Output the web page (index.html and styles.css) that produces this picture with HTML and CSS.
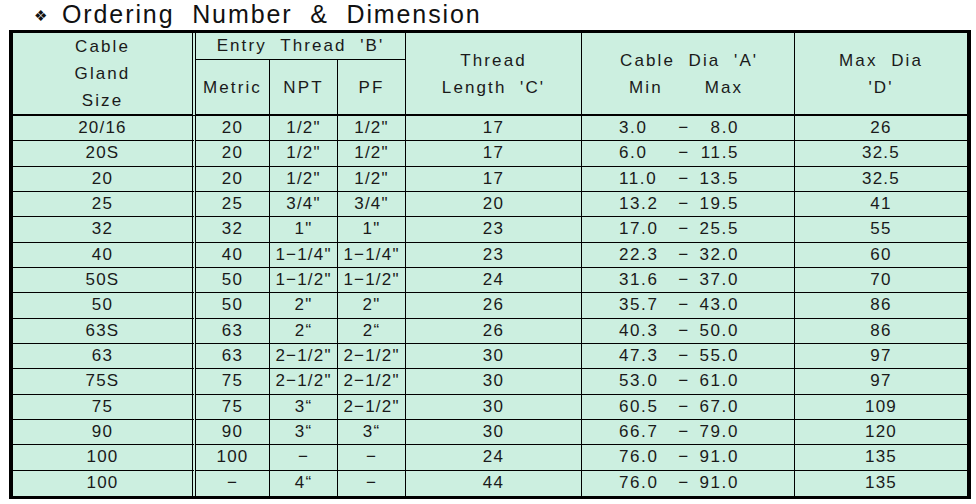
FILE: index.html
```html
<!DOCTYPE html>
<html>
<head>
<meta charset="utf-8">
<link rel="stylesheet" href="styles.css">
</head>
<body>
<h1 class="title"><span class="bullet">❖</span><span class="ttl">Ordering&nbsp; Number&nbsp; &amp;&nbsp; Dimension</span></h1>
<table class="spec">
  <colgroup>
    <col class="c-size">
    <col class="c-metric">
    <col class="c-npt">
    <col class="c-pf">
    <col class="c-len">
    <col class="c-dia">
    <col class="c-max">
  </colgroup>
  <thead>
    <tr class="h1">
      <th rowspan="2" class="dbl">Cable<br>Gland<br>Size</th>
      <th colspan="3">Entry&nbsp; Thread&nbsp; 'B'</th>
      <th rowspan="2">Thread<br>Length&nbsp; 'C'</th>
      <th rowspan="2" class="dia">Cable&nbsp; Dia&nbsp; 'A'<br><span class="mn">Min</span><span class="mx">Max</span></th>
      <th rowspan="2" class="last">Max&nbsp; Dia<br>'D'</th>
    </tr>
    <tr class="h2">
      <th>Metric</th>
      <th>NPT</th>
      <th>PF</th>
    </tr>
  </thead>
  <tbody>
    <tr><td class="dbl">20/16</td><td>20</td><td>1/2"</td><td>1/2"</td><td>17</td><td class="rng"><span class="lo">3.0</span><span class="ds">−</span><span class="hi">8.0</span></td><td class="last">26</td></tr>
    <tr><td class="dbl">20S</td><td>20</td><td>1/2"</td><td>1/2"</td><td>17</td><td class="rng"><span class="lo">6.0</span><span class="ds">−</span><span class="hi">11.5</span></td><td class="last">32.5</td></tr>
    <tr><td class="dbl">20</td><td>20</td><td>1/2"</td><td>1/2"</td><td>17</td><td class="rng"><span class="lo">11.0</span><span class="ds">−</span><span class="hi">13.5</span></td><td class="last">32.5</td></tr>
    <tr><td class="dbl">25</td><td>25</td><td>3/4"</td><td>3/4"</td><td>20</td><td class="rng"><span class="lo">13.2</span><span class="ds">−</span><span class="hi">19.5</span></td><td class="last">41</td></tr>
    <tr><td class="dbl">32</td><td>32</td><td>1"</td><td>1"</td><td>23</td><td class="rng"><span class="lo">17.0</span><span class="ds">−</span><span class="hi">25.5</span></td><td class="last">55</td></tr>
    <tr><td class="dbl">40</td><td>40</td><td>1−1/4"</td><td>1−1/4"</td><td>23</td><td class="rng"><span class="lo">22.3</span><span class="ds">−</span><span class="hi">32.0</span></td><td class="last">60</td></tr>
    <tr><td class="dbl">50S</td><td>50</td><td>1−1/2"</td><td>1−1/2"</td><td>24</td><td class="rng"><span class="lo">31.6</span><span class="ds">−</span><span class="hi">37.0</span></td><td class="last">70</td></tr>
    <tr><td class="dbl">50</td><td>50</td><td>2"</td><td>2"</td><td>26</td><td class="rng"><span class="lo">35.7</span><span class="ds">−</span><span class="hi">43.0</span></td><td class="last">86</td></tr>
    <tr><td class="dbl">63S</td><td>63</td><td>2“</td><td>2“</td><td>26</td><td class="rng"><span class="lo">40.3</span><span class="ds">−</span><span class="hi">50.0</span></td><td class="last">86</td></tr>
    <tr><td class="dbl">63</td><td>63</td><td>2−1/2"</td><td>2−1/2"</td><td>30</td><td class="rng"><span class="lo">47.3</span><span class="ds">−</span><span class="hi">55.0</span></td><td class="last">97</td></tr>
    <tr><td class="dbl">75S</td><td>75</td><td>2−1/2"</td><td>2−1/2"</td><td>30</td><td class="rng"><span class="lo">53.0</span><span class="ds">−</span><span class="hi">61.0</span></td><td class="last">97</td></tr>
    <tr><td class="dbl">75</td><td>75</td><td>3“</td><td>2−1/2"</td><td>30</td><td class="rng"><span class="lo">60.5</span><span class="ds">−</span><span class="hi">67.0</span></td><td class="last">109</td></tr>
    <tr><td class="dbl">90</td><td>90</td><td>3“</td><td>3“</td><td>30</td><td class="rng"><span class="lo">66.7</span><span class="ds">−</span><span class="hi">79.0</span></td><td class="last">120</td></tr>
    <tr><td class="dbl">100</td><td>100</td><td>−</td><td>−</td><td>24</td><td class="rng"><span class="lo">76.0</span><span class="ds">−</span><span class="hi">91.0</span></td><td class="last">135</td></tr>
    <tr class="end"><td class="dbl">100</td><td>−</td><td>4“</td><td>−</td><td>44</td><td class="rng"><span class="lo">76.0</span><span class="ds">−</span><span class="hi">91.0</span></td><td class="last">135</td></tr>
  </tbody>
</table>
</body>
</html>
```
FILE: styles.css
```css
html, body {
  margin: 0;
  padding: 0;
  background: #ffffff;
}
body {
  font-family: "Liberation Sans", Arial, sans-serif;
  color: #1a1a1a;
}
.title {
  margin: 0;
  height: 30px;
  padding-left: 34px;
  font-size: 25px;
  font-weight: normal;
  line-height: 28px;
  color: #111;
  white-space: nowrap;
}
.bullet {
  display: inline-block;
  width: 28px;
  font-size: 15px;
  vertical-align: 2px;
  font-family: "DejaVu Sans", sans-serif;
}
.ttl {
  letter-spacing: 1.9px;
}
.spec {
  margin-left: 9px;
  border-collapse: separate;
  border-spacing: 0;
  table-layout: fixed;
  width: 962px;
  background: #ccefe0;
  border-style: solid;
  border-color: #000;
  border-width: 3px 4px 3px 4px;
  font-size: 17px;
  letter-spacing: 1.2px;
}
.c-size { width: 183px; }
.c-metric { width: 74px; }
.c-npt { width: 68px; }
.c-pf { width: 68px; }
.c-len { width: 176px; }
.c-dia { width: 213px; }
.c-max { width: 172px; }

.spec th, .spec td {
  padding: 0;
  text-align: center;
  font-weight: normal;
  border-right: 1px solid #000;
  border-bottom: 1px solid #000;
  white-space: nowrap;
  overflow: hidden;
}
.spec th {
  line-height: 27px;
  letter-spacing: 2.1px;
}
.spec th.last, .spec td.last {
  border-right: none;
}
.spec .dbl {
  border-right: 4px double #000;
}
.h1 th[colspan] {
  height: 26px;
  line-height: 26px;
}
.h2 th {
  height: 53px;
  border-bottom-width: 2px;
}
.h1 th[rowspan] {
  border-bottom-width: 2px;
}
.spec tbody tr {
  height: 25.33px;
}
.spec td {
  line-height: 22px;
  height: 24.33px;
}
.spec tr.end td {
  border-bottom: none;
}
.spec th.dia {
  text-align: left;
  padding-left: 38px;
}
.mn {
  margin-left: 9px;
}
.mx {
  margin-left: 42px;
}
.spec td.rng {
  text-align: left;
  padding-left: 37px;
  letter-spacing: 1.6px;
}
.lo, .ds, .hi {
  display: inline-block;
}
.lo {
  width: 59px;
}
.ds {
  width: 12px;
  text-align: center;
}
.hi {
  width: 49px;
  text-align: right;
}
```
